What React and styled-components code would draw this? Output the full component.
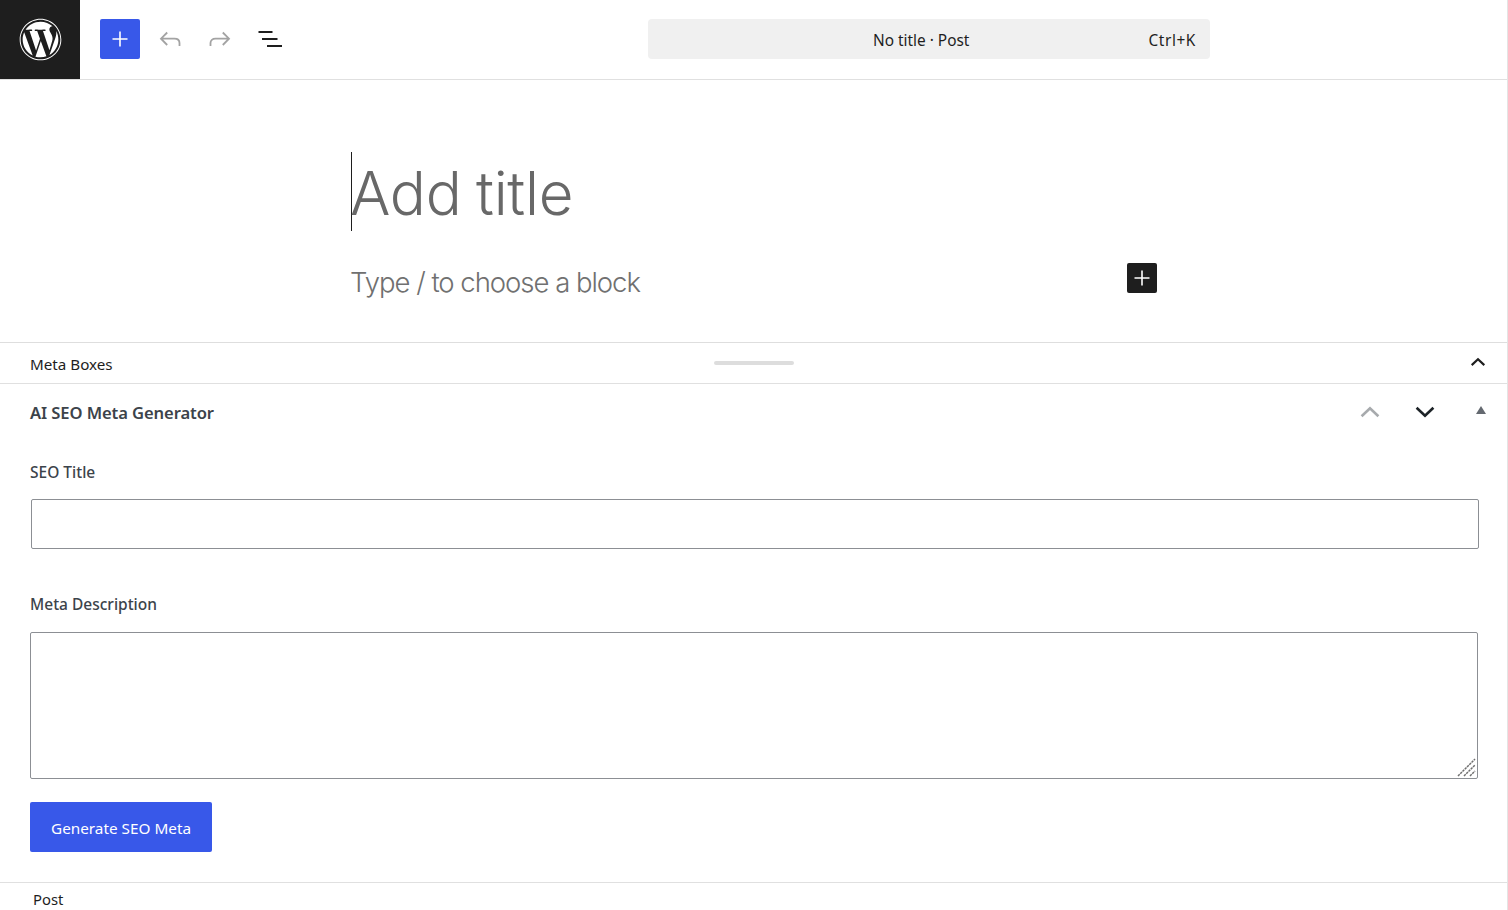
import styled, { createGlobalStyle } from "styled-components";
import { FaWordpress } from "react-icons/fa";

const GlobalStyle = createGlobalStyle`
  html, body {
    margin: 0;
    padding: 0;
    background: #ffffff;
    overflow: hidden;
  }
  * {
    box-sizing: border-box;
  }
  body {
    font-family: "Noto Sans", "Open Sans", "Liberation Sans", sans-serif;
    color: #1e1e1e;
  }
`;

const Page = styled.div`
  width: 1508px;
  height: 910px;
  display: flex;
  flex-direction: column;
  border-right: 1px solid #e4e4e4;
  overflow: hidden;
`;

const Header = styled.header`
  height: 80px;
  flex: none;
  display: grid;
  grid-template-columns: 80px 1fr;
  border-bottom: 1px solid #e0e0e0;
`;

const LogoTile = styled.div`
  width: 80px;
  height: 79px;
  background: #1e1e1e;
  display: flex;
  align-items: center;
  justify-content: center;
  color: #ffffff;
`;

const Toolbar = styled.div`
  display: flex;
  align-items: center;
  padding: 0 0 1px 20px;
`;

const AddButton = styled.button`
  width: 40px;
  height: 40px;
  margin-right: 5px;
  border: 0;
  padding: 0;
  border-radius: 2px;
  background: #3858e9;
  color: #ffffff;
  display: flex;
  align-items: center;
  justify-content: center;
`;

const ToolIcon = styled.span`
  width: 50px;
  height: 40px;
  display: flex;
  align-items: center;
  justify-content: center;
  color: ${(p) => (p.$muted ? "#a3a3a3" : "#1e1e1e")};
`;

const CommandBar = styled.div`
  width: 562px;
  height: 40px;
  margin-left: 353px;
  border-radius: 4px;
  background: #f0f0f0;
  display: grid;
  grid-template-columns: 1fr auto;
  align-items: center;
  padding: 2px 14px 0 225px;
  font-size: 15.4px;
  color: #1e1e1e;
`;

const Shortcut = styled.span`
  letter-spacing: 0.6px;
`;

const Editor = styled.main`
  height: 262px;
  flex: none;
  padding: 72px 0 0 351px;
  display: flex;
  flex-direction: column;
`;

const TitleRow = styled.div`
  height: 79px;
  border-left: 1px solid #1e1e1e;
  display: flex;
  align-items: center;
  padding: 3px 0 0;
  font-family: Inter, "Noto Sans", sans-serif;
  font-size: 60px;
  font-weight: 300;
  letter-spacing: -0.3px;
  text-indent: -2px;
  word-spacing: -2px;
  color: #686868;
`;

const BlockRow = styled.div`
  width: 806px;
  margin-top: 32px;
  display: flex;
  align-items: flex-start;
  justify-content: space-between;
`;

const Placeholder = styled.div`
  margin: 1px 0 0 -1px;
  font-family: Inter, "Noto Sans", sans-serif;
  font-size: 27.5px;
  font-weight: 300;
  line-height: 36px;
  letter-spacing: -1.03px;
  color: #707070;
`;

const BlockAdd = styled.button`
  width: 30px;
  height: 30px;
  border: 0;
  padding: 0;
  border-radius: 2px;
  background: #1e1e1e;
  color: #ffffff;
  display: flex;
  align-items: center;
  justify-content: center;
`;

const MetaBar = styled.div`
  height: 42px;
  flex: none;
  border-top: 1px solid #dedede;
  border-bottom: 1px solid #e0e0e0;
  display: grid;
  grid-template-columns: 1fr 80px 1fr;
  align-items: center;
  padding: 0 30px;
  font-size: 15.2px;
`;

const MetaLabel = styled.span`
  padding-top: 2px;
`;

const Handle = styled.span`
  height: 4px;
  border-radius: 2px;
  background: #dddddd;
`;

const Toggle = styled.span`
  justify-self: end;
  display: flex;
  margin: -3px -10px 0 0;
`;

const Panel = styled.section`
  flex: 1;
  padding: 0 29px 0 30px;
  display: flex;
  flex-direction: column;
  align-items: flex-start;
`;

const PanelHead = styled.div`
  width: 100%;
  height: 58px;
  flex: none;
  display: flex;
  align-items: center;
  justify-content: space-between;
  margin-bottom: 20px;
`;

const PanelTitle = styled.h2`
  margin: -2px 0 0;
  font-size: 16.6px;
  font-weight: 600;
  letter-spacing: -0.1px;
  color: #3c434a;
`;

const PanelActions = styled.div`
  display: flex;
  align-items: center;
  margin: -3px -8px 0 0;
  gap: 31px;
`;

const Arrow = styled.span`
  display: flex;
  color: ${(p) => p.$color};
`;

const Triangle = styled.span`
  width: 0;
  height: 0;
  border-left: 5px solid transparent;
  border-right: 5px solid transparent;
  border-bottom: 8px solid #646970;
  margin: -3px 0 0 8px;
`;

const FieldLabel = styled.label`
  display: block;
  font-size: 15.5px;
  font-weight: 500;
  line-height: 20px;
  color: #3c434a;
`;

const TitleInput = styled.input`
  display: block;
  width: 1448px;
  height: 50px;
  margin: 17px 0 45px 1px;
  border: 1px solid #8c8f94;
  border-radius: 2px;
  background: #ffffff;
  padding: 0 8px;
`;

const DescWrap = styled.div`
  position: relative;
  width: 1448px;
  height: 147px;
  margin: 18px 0 23px;
  flex: none;
`;

const DescInput = styled.textarea`
  display: block;
  width: 100%;
  height: 100%;
  border: 1px solid #8c8f94;
  border-radius: 2px;
  background: #ffffff;
  padding: 8px;
  resize: none;
`;

const ResizeGrip = styled.svg`
  position: absolute;
  right: 1px;
  bottom: 1px;
  color: #6f6f6f;
`;

const GenerateButton = styled.button`
  width: 182px;
  height: 50px;
  flex: none;
  border: 0;
  border-radius: 2px;
  background: #3858e9;
  color: #ffffff;
  font-family: inherit;
  font-size: 15.3px;
  padding: 2px 0 0;
`;

const Footer = styled.footer`
  height: 28px;
  flex: none;
  border-top: 1px solid #e0e0e0;
  padding: 6px 0 0 33px;
  font-size: 14.8px;
  line-height: 20px;
`;

const Plus = () => (
  <svg width="24" height="24" viewBox="0 0 24 24" fill="none" stroke="currentColor" strokeWidth="1.6">
    <path d="M12 4.5v15M4.5 12h15" />
  </svg>
);

const Undo = () => (
  <svg width="24" height="24" viewBox="0 0 24 24" fill="none" stroke="currentColor" strokeWidth="1.8">
    <path d="M9.2 5.5 3 11.7l6.2 6.3M3.2 11.7h13.3c3 0 5 1.8 5 4.4V19" />
  </svg>
);

const Redo = () => (
  <svg width="24" height="24" viewBox="0 0 24 24" fill="none" stroke="currentColor" strokeWidth="1.8">
    <path d="M14.8 5.5 21 11.7 14.8 18M20.8 11.7H7.5c-3 0-5 1.8-5 4.4V19" />
  </svg>
);

const ListView = () => (
  <svg width="24" height="24" viewBox="0 0 24 24" fill="none" stroke="currentColor" strokeWidth="2">
    <path d="M.5 5h14M4 12h15.5M9 19h15" />
  </svg>
);

const Chevron = ({ up, size = 24, width = 2.2 }) => (
  <svg width={size} height={size} viewBox="0 0 20 20" fill="none" stroke="currentColor" strokeWidth={width}>
    <path d={up ? "M3 13.5l7-6.5 7 6.5" : "M3 6.5l7 6.5 7-6.5"} />
  </svg>
);

export default function App() {
  return (
    <>
      <GlobalStyle />
      <Page>
        <Header>
          <LogoTile>
            <FaWordpress size={43} />
          </LogoTile>
          <Toolbar>
            <AddButton aria-label="Add block">
              <Plus />
            </AddButton>
            <ToolIcon $muted>
              <Undo />
            </ToolIcon>
            <ToolIcon $muted>
              <Redo />
            </ToolIcon>
            <ToolIcon>
              <ListView />
            </ToolIcon>
            <CommandBar>
              <span>No title · Post</span>
              <Shortcut>Ctrl+K</Shortcut>
            </CommandBar>
          </Toolbar>
        </Header>
        <Editor>
          <TitleRow>Add title</TitleRow>
          <BlockRow>
            <Placeholder>Type / to choose a block</Placeholder>
            <BlockAdd aria-label="Add block">
              <Plus />
            </BlockAdd>
          </BlockRow>
        </Editor>
        <MetaBar>
          <MetaLabel>Meta Boxes</MetaLabel>
          <Handle />
          <Toggle>
            <Chevron up size={18} width={2.4} />
          </Toggle>
        </MetaBar>
        <Panel>
          <PanelHead>
            <PanelTitle>AI SEO Meta Generator</PanelTitle>
            <PanelActions>
              <Arrow $color="#a7aaad">
                <Chevron up />
              </Arrow>
              <Arrow $color="#1d2327">
                <Chevron />
              </Arrow>
              <Triangle />
            </PanelActions>
          </PanelHead>
          <FieldLabel>SEO Title</FieldLabel>
          <TitleInput type="text" />
          <FieldLabel>Meta Description</FieldLabel>
          <DescWrap>
            <DescInput />
            <ResizeGrip width="20" height="20" viewBox="0 0 20 20" fill="none" stroke="currentColor" strokeWidth="1.5" strokeDasharray="2.4 0.8">
              <path d="M1 18 18 1M7 18 18 7M13 18l5-5" />
            </ResizeGrip>
          </DescWrap>
          <GenerateButton>Generate SEO Meta</GenerateButton>
        </Panel>
        <Footer>Post</Footer>
      </Page>
    </>
  );
}
